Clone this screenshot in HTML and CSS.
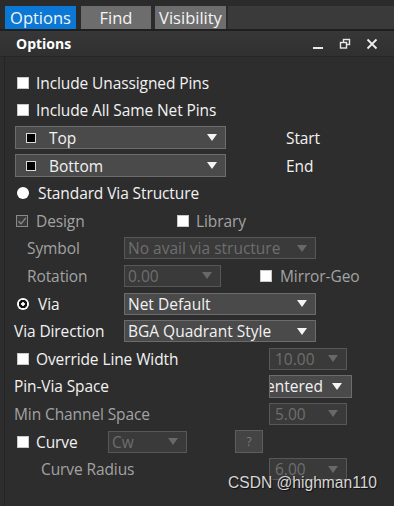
FILE: index.html
```html
<!DOCTYPE html>
<html>
<head>
<meta charset="utf-8">
<link rel="stylesheet" href="styles.css">
</head>
<body>
<div class="tabs">
  <div class="tab active">Options</div>
  <div class="tab">Find</div>
  <div class="tab">Visibility</div>
  <div class="tab-fill"></div>
</div>
<div class="header">
  <span class="title">Options</span>
  <div class="win-icons">
    <svg width="12" height="12" viewBox="0 0 12 12"><rect x="1" y="9" width="10" height="2" fill="#e8e8e8"/></svg>
    <svg width="12" height="12" viewBox="0 0 12 12"><rect x="4.5" y="1.5" width="6" height="5" fill="none" stroke="#e8e8e8" stroke-width="1.4"/><rect x="1.5" y="4.5" width="6" height="5.5" fill="#333" stroke="#e8e8e8" stroke-width="1.4"/></svg>
    <svg width="12" height="12" viewBox="0 0 12 12"><path d="M1.5 1.5 L10.5 10.5 M10.5 1.5 L1.5 10.5" stroke="#f0f0f0" stroke-width="1.8"/></svg>
  </div>
</div>
<div class="panel">
  <div class="row"><span class="chk"></span><span class="lbl">Include Unassigned Pins</span></div>
  <div class="row"><span class="chk"></span><span class="lbl">Include All Same Net Pins</span></div>
  <div class="row">
    <div class="sel layer"><span class="mini"></span><span class="sel-text">Top</span><span class="arrow"></span></div>
    <span class="lbl side">Start</span>
  </div>
  <div class="row">
    <div class="sel layer"><span class="mini"></span><span class="sel-text">Bottom</span><span class="arrow"></span></div>
    <span class="lbl side">End</span>
  </div>
  <div class="row"><span class="radio"></span><span class="lbl">Standard Via Structure</span></div>
  <div class="row">
    <span class="chk dis"><svg width="10" height="10" viewBox="0 0 10 10"><path d="M1.5 5.2 L4 7.8 L8.8 1.8" fill="none" stroke="#8c8c8c" stroke-width="1.3"/></svg></span><span class="lbl grey design">Design</span>
    <span class="chk"></span><span class="lbl grey">Library</span>
  </div>
  <div class="row">
    <span class="lbl grey cell indent">Symbol</span>
    <div class="sel dis wide"><span class="sel-text">No avail via structure</span><span class="arrow"></span></div>
  </div>
  <div class="row">
    <span class="lbl grey cell indent">Rotation</span>
    <div class="sel dis rot"><span class="sel-text">0.00</span><span class="arrow"></span></div>
    <span class="chk mirror"></span><span class="lbl grey">Mirror-Geo</span>
  </div>
  <div class="row">
    <span class="radio on"></span><span class="lbl via">Via</span>
    <div class="sel wide"><span class="sel-text">Net Default</span><span class="arrow"></span></div>
  </div>
  <div class="row">
    <span class="lbl cell">Via Direction</span>
    <div class="sel wide"><span class="sel-text">BGA Quadrant Style</span><span class="arrow"></span></div>
  </div>
  <div class="row">
    <span class="chk"></span><span class="lbl olw">Override Line Width</span>
    <div class="sel dis num"><span class="sel-text">10.00</span><span class="arrow"></span></div>
  </div>
  <div class="row">
    <span class="lbl pvs">Pin-Via Space</span>
    <div class="sel num pv"><span class="sel-text">entered</span><span class="arrow"></span></div>
  </div>
  <div class="row">
    <span class="lbl grey mcs">Min Channel Space</span>
    <div class="sel dis num"><span class="sel-text">5.00</span><span class="arrow"></span></div>
  </div>
  <div class="row">
    <span class="chk"></span><span class="lbl curve">Curve</span>
    <div class="sel dis cw"><span class="sel-text">Cw</span><span class="arrow"></span></div>
    <div class="qbtn">?</div>
  </div>
  <div class="row">
    <span class="lbl grey cr">Curve Radius</span>
    <div class="sel dis num"><span class="sel-text">6.00</span><span class="arrow"></span></div>
  </div>
</div>
<div class="watermark">CSDN @highman110</div>
</body>
</html>
```
FILE: styles.css
```css
* { box-sizing: border-box; }
html, body { margin: 0; padding: 0; }
body {
  width: 394px;
  height: 506px;
  overflow: hidden;
  background: #2d2d2d;
  font-family: "Open Sans", "Noto Sans", sans-serif;
  color: #f2f2f2;
  position: relative;
}
.tabs {
  display: flex;
  height: 31px;
  padding-top: 6px;
  background: #2b2b2b;
  border-bottom: 2px solid #1f1f1f;
}
.tab {
  height: 23px;
  width: 71px;
  margin-left: 5px;
  background: #6d6d6d;
  color: #f4f4f4;
  font-size: 16.5px;
  line-height: 23px;
  text-align: center;
}
.tab:nth-child(2) { width: 70px; }
.tab:nth-child(3) { margin-left: 4px; }
.tab.active { background: #0a78d4; }
.tab-fill { flex: 1; margin-left: 2px; background: #3a3a3a; height: 23px; }
.header {
  height: 26px;
  display: flex;
  align-items: center;
  justify-content: space-between;
  background: linear-gradient(#373737, #303030);
  border-bottom: 1px solid #262626;
  padding-left: 16px;
  padding-right: 16px;
}
.title { font-weight: 700; font-size: 14px; color: #fff; }
.win-icons { display: flex; gap: 15px; align-items: center; }
.panel {
  padding-top: 12px;
  margin-left: 4px;
  border-left: 1px solid #242424;
  height: 449px;
}
.row {
  height: 27.6px;
  display: flex;
  align-items: center;
  padding-left: 9px;
}
.lbl { font-size: 15.5px; white-space: nowrap; letter-spacing: -0.1px; }
.grey { color: #a3a3a3; }
.chk {
  width: 12px; height: 12px;
  background: #fff;
  border: 1px solid #c8c8c8;
  margin-left: 3px;
  margin-right: 7px;
  flex: none;
  display: flex; align-items: center; justify-content: center;
}
.chk.dis { background: #3a3a3a; border-color: #8a8a8a; margin-left: 2px; margin-right: 8px; }
.lbl.design { width: 138px; }
.radio {
  width: 12px; height: 12px; border-radius: 50%;
  background: #fff; margin-left: 3px; margin-right: 9px; flex: none;
}
.radio.on {
  background: radial-gradient(circle, #fff 0 1.5px, #111 2px 4px, #fff 4.5px);
}
.sel {
  height: 23px;
  display: flex;
  align-items: center;
  background: #4a4a4a;
  border: 1px solid #6c6c6c;
  padding-left: 3px;
  font-size: 15.5px;
  flex: none;
  overflow: hidden;
}
.sel-text { white-space: nowrap; flex: 1; overflow: hidden; }
.arrow {
  width: 0; height: 0;
  border-left: 5.5px solid transparent;
  border-right: 5.5px solid transparent;
  border-top: 7px solid #f4f4f4;
  margin-right: 8px;
  flex: none;
}
.sel.dis { background: #3a3a3a; border-color: #575757; color: #6e6e6e; height: 22px; }
.sel.dis .arrow { border-top-color: #686868; }
.sel.layer { width: 211px; padding-left: 10px; margin-left: 1px; }
.mini { width: 10px; height: 10px; background: #000; border: 1px solid #d8d8d8; margin-right: 13px; flex: none; }
.side { margin-left: 60px; }
.cell { width: 110px; }
.cell.indent { padding-left: 13px; }
.wide { width: 192px; height: 22px; }
.rot { width: 97px; }
.mirror { margin-left: 39px; margin-right: 8px; }
.via { width: 86px; }
.olw { width: 233px; }
.num { width: 78px; padding-left: 5px; }
.pvs { width: 255px; }
.pv { width: 83px; padding-left: 0; }
.pv .sel-text { text-indent: -4px; }
.pv .arrow { margin-right: 9px; }
.mcs { width: 255px; }
.curve { width: 72px; }
.cw { width: 79px; }
.qbtn {
  margin-left: 48px;
  width: 28px; height: 23px;
  background: #444;
  border: 1px solid #5e5e5e;
  color: #7a7a7a;
  font-size: 12px;
  display: flex; align-items: center; justify-content: center;
}
.cr { width: 255px; padding-left: 27px; }
.watermark {
  position: absolute;
  left: 228px;
  top: 474px;
  font-family: "Liberation Sans", sans-serif;
  font-size: 15.6px;
  color: #d6d6d6;
  text-shadow: 1px 1px 1px #111;
}
```
